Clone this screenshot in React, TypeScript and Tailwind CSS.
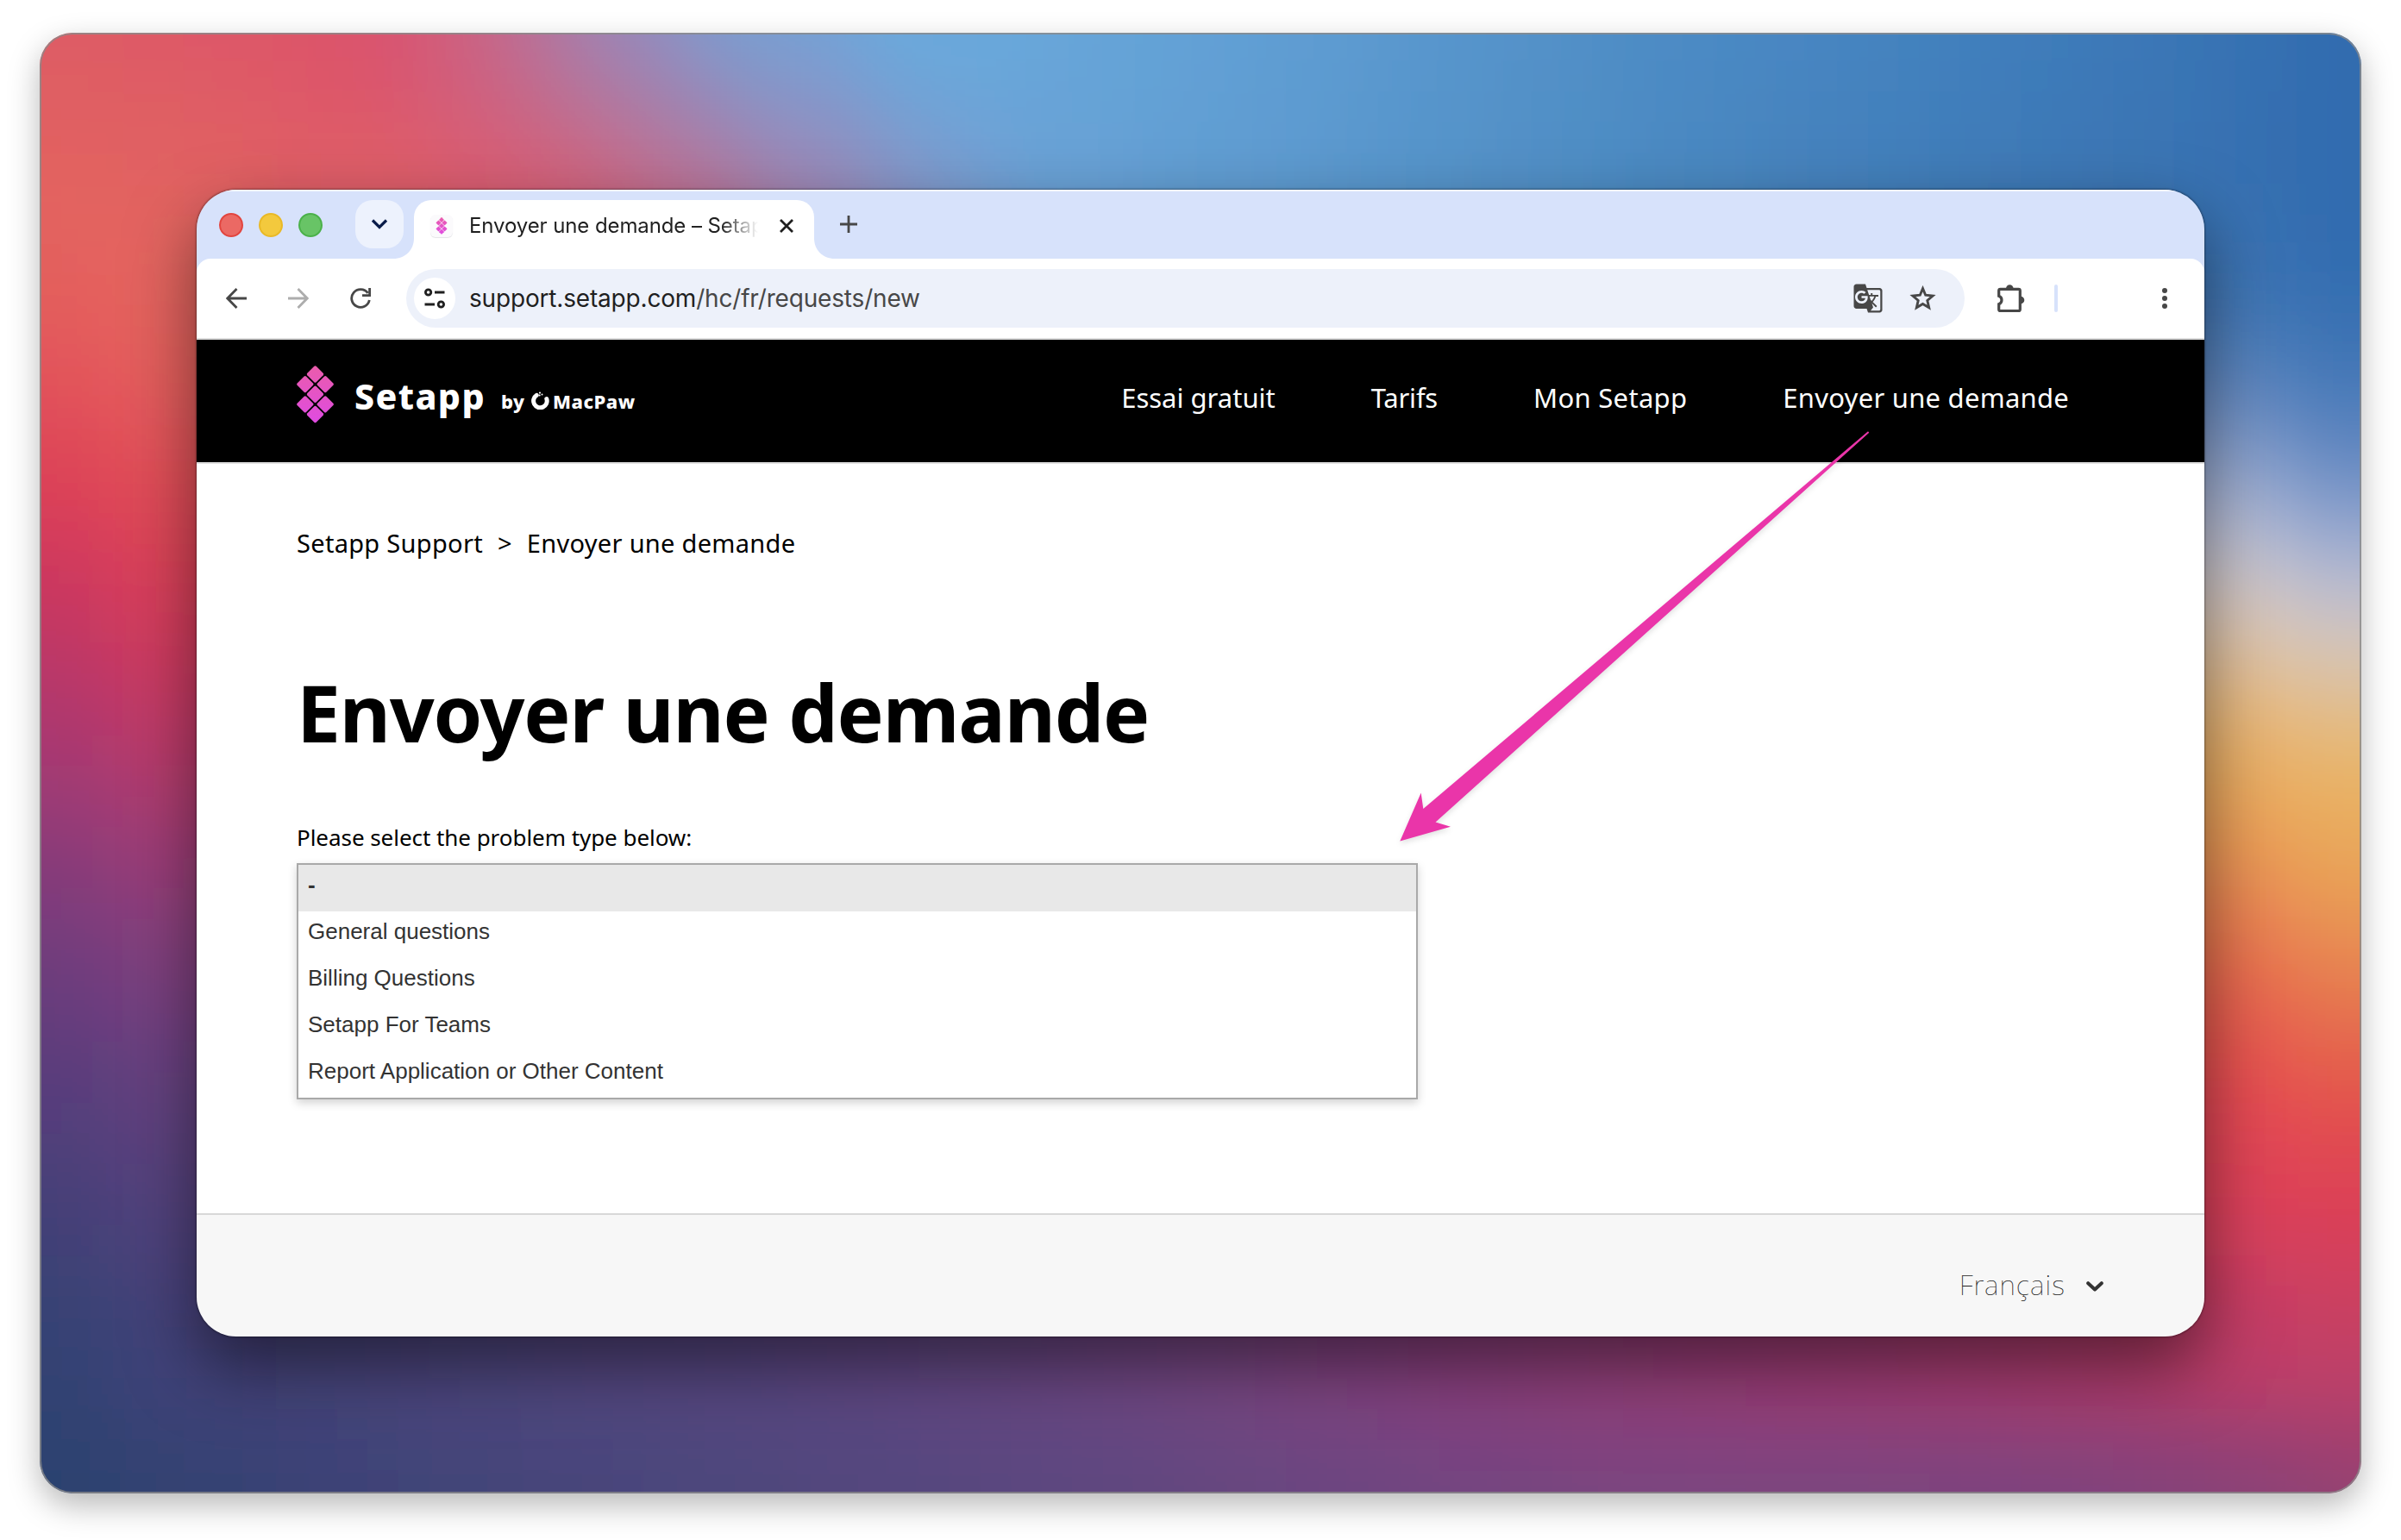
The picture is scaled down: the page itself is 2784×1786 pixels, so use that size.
import type { ReactNode } from "react";
import { MdGTranslate } from "react-icons/md";

type ColorPoint = [x: number, y: number, color: string];

const BREADCRUMBS = ["Setapp Support", ">", "Envoyer une demande"];

const PROBLEM_TYPES = [
  "General questions",
  "Billing Questions",
  "Setapp For Teams",
  "Report Application or Other Content",
];

// wallpaper colours, spread around the window
const WALLPAPER: ColorPoint[] = [
  // top
  [26, 22, "#dd5a66"],
  [130, 22, "#dd5668"],
  [240, 22, "#dc506b"],
  [300, 22, "#d45a78"],
  [345, 22, "#b276a0"],
  [400, 22, "#8c8fc4"],
  [480, 22, "#71a3d6"],
  [600, 22, "#6aa9dc"],
  [680, 22, "#68a7da"],
  [760, 22, "#64a3d7"],
  [840, 22, "#5f9ed3"],
  [920, 22, "#5a98cf"],
  [1000, 22, "#5492ca"],
  [1080, 22, "#4e8cc6"],
  [1160, 22, "#4988c4"],
  [1240, 22, "#4584c1"],
  [1320, 22, "#407ebc"],
  [1400, 22, "#3c78b7"],
  [1480, 22, "#3671b2"],
  [1542, 22, "#3069ad"],
  [26, 75, "#e16062"],
  [110, 75, "#df5e64"],
  [200, 75, "#de5a66"],
  [320, 75, "#d95a72"],
  [390, 75, "#bf6f94"],
  [450, 75, "#9c85b6"],
  [520, 75, "#7f9bd0"],
  [620, 75, "#6ba7da"],
  [700, 75, "#66a3d7"],
  [780, 75, "#629fd4"],
  [860, 75, "#5c9ad0"],
  [940, 75, "#5694ca"],
  [1020, 75, "#508fc5"],
  [1100, 75, "#4b89c2"],
  [1180, 75, "#4583be"],
  [1260, 75, "#417eba"],
  [1340, 75, "#3d79b7"],
  [1420, 75, "#3974b4"],
  [1500, 75, "#336db0"],
  [26, 124, "#e3655f"],
  [130, 124, "#e36561"],
  [250, 124, "#df5f68"],
  [370, 124, "#dc5c6e"],
  [450, 124, "#cb6883"],
  [530, 124, "#a97eaa"],
  [600, 124, "#8694c8"],
  [700, 124, "#69a0d4"],
  [800, 124, "#609bd0"],
  [900, 124, "#5896cc"],
  [1000, 124, "#518fc6"],
  [1100, 124, "#4a88c0"],
  [1200, 124, "#4480bb"],
  [1300, 124, "#3f7ab6"],
  [1380, 124, "#3b76b4"],
  [1460, 124, "#3770b1"],
  [1542, 124, "#306aae"],
  // left
  [26, 200, "#e45f5c"],
  [26, 260, "#e1505a"],
  [26, 320, "#dd3e57"],
  [26, 380, "#cb375e"],
  [26, 440, "#b83769"],
  [26, 500, "#a23a74"],
  [26, 570, "#843b7a"],
  [26, 640, "#693c7d"],
  [26, 720, "#553e7b"],
  [26, 800, "#424177"],
  [26, 880, "#334373"],
  [26, 975, "#2b4270"],
  [128, 200, "#e5685f"],
  [128, 260, "#e55e5c"],
  [128, 320, "#e34f58"],
  [128, 380, "#de3f58"],
  [128, 440, "#d03a60"],
  [128, 500, "#b83b6d"],
  [128, 570, "#9b3f7a"],
  [128, 640, "#7c4180"],
  [128, 720, "#634280"],
  [128, 800, "#52437d"],
  [128, 880, "#42437a"],
  [128, 975, "#344272"],
  // bottom
  [215, 975, "#3b4376"],
  [300, 975, "#424478"],
  [385, 975, "#47457a"],
  [470, 975, "#4d467b"],
  [555, 975, "#52467d"],
  [640, 975, "#58467e"],
  [720, 975, "#5e467f"],
  [800, 975, "#65467f"],
  [880, 975, "#6c4580"],
  [960, 975, "#734480"],
  [1040, 975, "#79447f"],
  [1120, 975, "#7b447f"],
  [1200, 975, "#7b447f"],
  [1280, 975, "#7b447e"],
  [1350, 975, "#7e437d"],
  [1420, 975, "#83427a"],
  [1480, 975, "#8b4277"],
  [1542, 975, "#934272"],
  [215, 880, "#49447d"],
  [300, 880, "#504680"],
  [385, 880, "#554782"],
  [470, 880, "#594783"],
  [555, 880, "#604784"],
  [640, 880, "#674885"],
  [720, 880, "#714785"],
  [800, 880, "#7b4684"],
  [880, 880, "#854381"],
  [960, 880, "#8f407e"],
  [1040, 880, "#963f7a"],
  [1120, 880, "#9d3d77"],
  [1200, 880, "#a43c74"],
  [1280, 880, "#ac3c71"],
  [1350, 880, "#b33c6d"],
  [1420, 880, "#bb3d69"],
  [1480, 880, "#c23d66"],
  // right
  [1542, 180, "#326cb0"],
  [1542, 240, "#3d74b5"],
  [1542, 290, "#5480bc"],
  [1542, 335, "#8198cb"],
  [1542, 380, "#bbc1dc"],
  [1542, 420, "#d8cdcb"],
  [1542, 460, "#e3bd89"],
  [1542, 500, "#e9b25e"],
  [1542, 550, "#eaac5b"],
  [1542, 600, "#e89854"],
  [1542, 650, "#e67a4f"],
  [1542, 700, "#e45c4c"],
  [1542, 750, "#e24650"],
  [1542, 800, "#da3e58"],
  [1542, 850, "#cf3f60"],
  [1542, 900, "#b9406b"],
  [1440, 180, "#3b74b3"],
  [1440, 240, "#4f7db9"],
  [1440, 290, "#8199c8"],
  [1440, 335, "#b5bedb"],
  [1440, 380, "#d6cfd4"],
  [1440, 420, "#e2c7ac"],
  [1440, 460, "#e9b673"],
  [1440, 500, "#eaad5c"],
  [1440, 550, "#ea9b55"],
  [1440, 600, "#e97d50"],
  [1440, 650, "#e75f4e"],
  [1440, 700, "#e64c50"],
  [1440, 750, "#e34156"],
  [1440, 800, "#d73f5d"],
];

const CELL = 20;
const SPREAD = 38;

function hexToRgb(hex: string) {
  return [1, 3, 5].map((i) => parseInt(hex.slice(i, i + 2), 16));
}

// gaussian-weighted mean of the colour points around (x, y)
function colorAt(x: number, y: number) {
  const sum = [0, 0, 0];
  let total = 1e-12;
  for (const [px, py, color] of WALLPAPER) {
    const d2 = (px - x) ** 2 + (py - y) ** 2;
    const w = Math.exp(-d2 / (2 * SPREAD * SPREAD)) + 1e-9;
    hexToRgb(color).forEach((c, i) => {
      sum[i] += c * w;
    });
    total += w;
  }
  return `rgb(${sum.map((c) => Math.round(c / total)).join(",")})`;
}

function Wallpaper() {
  const cells: ReactNode[] = [];
  for (let y = -20; y < 1020; y += CELL) {
    for (let x = -20; x < 1600; x += CELL) {
      // the middle is always covered by the window
      if (x > 180 && x < 1360 && y > 180 && y < 800) continue;
      cells.push(
        <rect
          key={`${x}-${y}`}
          x={x}
          y={y}
          width={CELL + 1}
          height={CELL + 1}
          fill={colorAt(x + CELL / 2, y + CELL / 2)}
        />,
      );
    }
  }
  return (
    <svg
      className="absolute inset-0 size-full"
      viewBox="26 21.6 1516 953.6"
      preserveAspectRatio="none"
    >
      <filter id="soften" x="-5%" y="-5%" width="110%" height="110%">
        <feGaussianBlur stdDeviation="14" />
      </filter>
      <g filter="url(#soften)">{cells}</g>
    </svg>
  );
}

function SetappMark({ className }: { className: string }) {
  const centers = [
    [21.5, 10],
    [9.8, 21.6],
    [33.2, 21.6],
    [21.5, 33.2],
    [9.8, 44.9],
    [33.2, 44.9],
    [21.5, 56.5],
  ];
  return (
    <svg className={className} viewBox="0 0 43 67">
      <defs>
        <linearGradient
          id="mark"
          gradientUnits="userSpaceOnUse"
          x1="0"
          y1="0"
          x2="0"
          y2="67"
        >
          <stop offset="0" stopColor="#ea5cab" />
          <stop offset="1" stopColor="#df4be2" />
        </linearGradient>
      </defs>
      <g fill="url(#mark)">
        {centers.map(([cx, cy]) => (
          <path
            key={`${cx}-${cy}`}
            d={`M${cx - 1.2} ${cy - 9.2}q1.2 -1 2.4 0l8 8q1 1.2 0 2.4l-8 8q-1.2 1 -2.4 0l-8 -8q-1 -1.2 0 -2.4z`}
          />
        ))}
      </g>
    </svg>
  );
}

function TabStrip() {
  return (
    <div className="flex h-20 items-end bg-[#d7e2fb] shadow-[inset_0_2px_0_#f3f6fe]">
      <div className="mb-[25px] ml-[26px] flex gap-[18px]">
        <span className="size-7 rounded-full border-2 border-[#e2453f] bg-[#eb6964]" />
        <span className="size-7 rounded-full border-2 border-[#e9b927] bg-[#f3c93d]" />
        <span className="size-7 rounded-full border-2 border-[#4bb14a] bg-[#68c466]" />
      </div>

      <span className="mb-3 ml-[38px] flex size-14 items-center justify-center rounded-[20px] bg-[#edf2fd]">
        <svg className="size-6" viewBox="0 0 24 24" fill="none">
          <path d="M4 7.5l8 8 8-8" stroke="#0a1c4a" strokeWidth="3.2" />
        </svg>
      </span>

      <div className="relative ml-3 flex h-[68px] w-[464px] items-center rounded-t-[20px] bg-white pb-2">
        <svg
          className="absolute bottom-0 -left-6 size-6"
          viewBox="0 0 24 24"
          fill="#fff"
        >
          <path d="M24 0v24H0C14 24 24 14 24 0z" />
        </svg>
        <svg
          className="absolute -right-6 bottom-0 size-6"
          viewBox="0 0 24 24"
          fill="#fff"
        >
          <path d="M0 0v24h24C10 24 0 14 0 0z" />
        </svg>
        <span className="ml-[19px] flex size-[26px] items-center justify-center rounded-md bg-[#fbfafc] shadow-[0_1px_1px_#e4e4e8]">
          <SetappMark className="h-5 w-[14px]" />
        </span>
        <span className="ml-[19px] w-[335px] mask-r-from-[292px] mask-r-to-[335px] text-[24px] tracking-[-0.1px] whitespace-nowrap text-[#1f1f1f]">
          Envoyer une demande – Setap
        </span>
        <svg className="ml-[25px] size-4" viewBox="0 0 16 16" fill="none">
          <path d="M1 1l14 14M15 1L1 15" stroke="#1f1f1f" strokeWidth="2.8" />
        </svg>
      </div>

      <svg className="mb-[30px] ml-[30px] size-5" viewBox="0 0 20 20" fill="none">
        <path d="M10 0v20M0 10h20" stroke="#474747" strokeWidth="2.8" />
      </svg>
    </div>
  );
}

function Toolbar() {
  return (
    <div className="bg-[#d7e2fb]">
      <div className="flex h-[94px] items-center rounded-t-[16px] border-b-2 border-[#dcdcdc] bg-white">
        <svg className="ml-[34px] size-6" viewBox="0 0 24 24" fill="none">
          <path
            d="M24 12H2M12.5 1L1.8 12l10.7 11"
            stroke="#474747"
            strokeWidth="2.8"
          />
        </svg>
        <svg className="ml-12 size-6" viewBox="0 0 24 24" fill="none">
          <path
            d="M0 12h22M11.5 1l10.7 11-10.7 11"
            stroke="#adadad"
            strokeWidth="2.8"
          />
        </svg>
        <svg className="ml-12 size-6" viewBox="0 0 24 24" fill="none">
          <path
            d="M20.5 5.8A10.4 10.4 0 1 0 22.3 14M22.6 0v8.6H14"
            stroke="#474747"
            strokeWidth="2.8"
          />
        </svg>

        <div className="ml-[41px] flex h-[68px] w-[1807px] items-center rounded-full bg-[#edf1fa] pl-[9px]">
          <span className="flex size-12 items-center justify-center rounded-full bg-white">
            <svg
              className="size-6"
              viewBox="0 0 24 24"
              fill="none"
              stroke="#1f1f1f"
              strokeWidth="2.8"
            >
              <circle cx="4.6" cy="5" r="3.2" />
              <path d="M12 5h11.5M0.5 19H12" />
              <circle cx="19.4" cy="19" r="3.2" />
            </svg>
          </span>
          <span className="ml-4 text-[28px] tracking-[-0.18px] text-[#474747]">
            <span className="text-[#1f1f1f]">support.setapp.com</span>
            /hc/fr/requests/new
          </span>
          <MdGTranslate className="ml-auto size-[36px] text-[#474747]" />
          <svg className="mr-[33px] ml-[30px] h-[30px] w-[31px]" viewBox="0 0 31 30">
            <path
              d="M15.5 3.6l3.200 7.600 8.400.8-6.300 5.500 1.900 8.200-7.200-4.300-7.200 4.300 1.900-8.200-6.300-5.500 8.400-.8z"
              fill="none"
              stroke="#474747"
              strokeWidth="2.9"
            />
          </svg>
        </div>

        <svg
          className="ml-[38px] h-[33px] w-8"
          viewBox="0 0 32 33"
          fill="none"
        >
          <path
            d="M3.5 5.3h21q1.8 0 1.8 1.8v21.6q0 1.8 -1.8 1.8h-21q-1.8 0 -1.8-1.8v-6a5 5 0 0 0 0-9.4v-6.2q0-1.8 1.8-1.8z"
            stroke="#474747"
            strokeWidth="3.2"
          />
          <path
            d="M10 4.500a4.300 4.300 0 0 1 8.600 0zM27 13.700a4.300 4.300 0 0 1 0 8.600z"
            fill="#474747"
          />
        </svg>
        <span className="ml-[34px] h-8 w-1 rounded-full bg-[#d7e2fb]" />
        <div className="ml-[121px] flex flex-col gap-[3px]">
          <span className="size-1.5 rounded-full bg-[#474747]" />
          <span className="size-1.5 rounded-full bg-[#474747]" />
          <span className="size-1.5 rounded-full bg-[#474747]" />
        </div>
      </div>
    </div>
  );
}

function SiteHeader() {
  return (
    <header className="flex h-36 items-start border-b-2 border-[#e0e0e0] bg-black font-['Noto_Sans',sans-serif] text-white">
      <SetappMark className="mt-[30px] ml-[116px] h-[67px] w-[43px]" />
      <span className="mt-[38px] ml-6 w-[151px] text-[41px] leading-[54px] font-extrabold tracking-[1.4px]">
        Setapp
      </span>
      <div className="mt-[57px] ml-[19px] flex items-start text-[22px] leading-7 font-extrabold tracking-[0.5px]">
        <span className="w-7">by</span>
        <svg className="mt-[3px] ml-[7px] size-[21px]" viewBox="0 0 21 21">
          <path
            d="M6.2 4.400A7.800 7.800 0 1 0 17.800 8.500"
            fill="none"
            stroke="#fff"
            strokeWidth="5"
            strokeLinecap="round"
          />
          <circle cx="10" cy="1.600" r="1.100" fill="#fff" />
          <circle cx="12.500" cy="3.500" r="1" fill="#fff" />
          <circle cx="9.700" cy="4.500" r="1" fill="#fff" />
        </svg>
        <span className="ml-1">MacPaw</span>
      </div>

      <nav className="mt-[46px] mr-[157px] ml-auto flex gap-[111px] text-[31px] leading-[42px]">
        <span>Essai gratuit</span>
        <span className="tracking-[-0.2px]">Tarifs</span>
        <span className="tracking-[0.3px]">Mon Setapp</span>
        <span className="tracking-[0.25px]">Envoyer une demande</span>
      </nav>
    </header>
  );
}

function ProblemTypeList() {
  return (
    <ul className="mt-3 w-[1300px] border-2 border-[#a9a9a9] bg-white font-['Liberation_Sans',Arial,sans-serif] text-[26px] leading-[46px] text-[#333] shadow-[0_4px_10px_rgba(0,0,0,0.18)]">
      <li className="h-[54px] bg-[#e8e8e8] pl-[11px] font-bold">-</li>
      {PROBLEM_TYPES.map((type) => (
        <li key={type} className="h-[54px] pl-[11px]">
          {type}
        </li>
      ))}
    </ul>
  );
}

function SupportPage() {
  return (
    <main className="h-[869px] bg-white pl-[116px] font-['Noto_Sans',sans-serif] text-black">
      <div className="flex gap-[17px] pt-[72px] text-[29px] leading-10 tracking-[0.3px]">
        {BREADCRUMBS.map((crumb) => (
          <span key={crumb}>{crumb}</span>
        ))}
      </div>
      <h1 className="mt-[114px] text-[91px] leading-[124px] font-bold tracking-[-1.15px]">
        Envoyer une demande
      </h1>
      <p className="mt-[65px] text-[26px] leading-9 tracking-[-0.05px]">
        Please select the problem type below:
      </p>
      <ProblemTypeList />
    </main>
  );
}

function Footer() {
  return (
    <footer className="flex h-[143px] justify-end border-t-2 border-[#d8d8d8] bg-[#f7f7f7] pr-[117px]">
      <span className="mt-[60px] font-['Noto_Sans',sans-serif] text-[32px] leading-[42px] font-thin tracking-[1.1px] text-[#222]">
        Français
      </span>
      <svg className="mt-[77px] ml-6 h-3 w-5" viewBox="0 0 20 12" fill="none">
        <path
          d="M2.2 2.2L10 9.5l7.8-7.3"
          stroke="#333"
          strokeWidth="4"
          strokeLinecap="round"
          strokeLinejoin="round"
        />
      </svg>
    </footer>
  );
}

// pink pointer from the nav link to the list
function PointerArrow() {
  return (
    <svg
      className="absolute top-[280px] left-[1390px] h-[490px] w-[560px] drop-shadow-[0_3px_3px_rgba(0,0,0,0.12)]"
      viewBox="1618 500 560 490"
    >
      <path
        d="M2166 500.3L1650.3 938 1647.7 919.5 1623.3 975.5 1682 958.7 1664.5 953.5 2167.300 501.800z"
        fill="#ea35a9"
      />
    </svg>
  );
}

export default function App() {
  return (
    <div className="h-[1786px] w-[2784px] overflow-hidden bg-white pt-[38px] pl-[46px] font-['Inter',sans-serif]">
      <div className="relative h-[1694px] w-[2692px] overflow-hidden rounded-[38px] shadow-[0_14px_36px_rgba(0,0,0,0.28)]">
        <Wallpaper />
        <div className="relative pt-[182px] pl-[182px]">
          <div className="relative h-[1330px] w-[2328px] rounded-[46px] shadow-[0_0_2px_1px_rgba(0,0,0,0.35),0_36px_80px_rgba(0,0,0,0.5)]">
            <div className="flex flex-col overflow-hidden rounded-[46px]">
              <TabStrip />
              <Toolbar />
              <SiteHeader />
              <SupportPage />
              <Footer />
            </div>
            <PointerArrow />
          </div>
        </div>
        <div className="absolute inset-0 rounded-[38px] border-2 border-[#8a8a8a]/80" />
      </div>
    </div>
  );
}
